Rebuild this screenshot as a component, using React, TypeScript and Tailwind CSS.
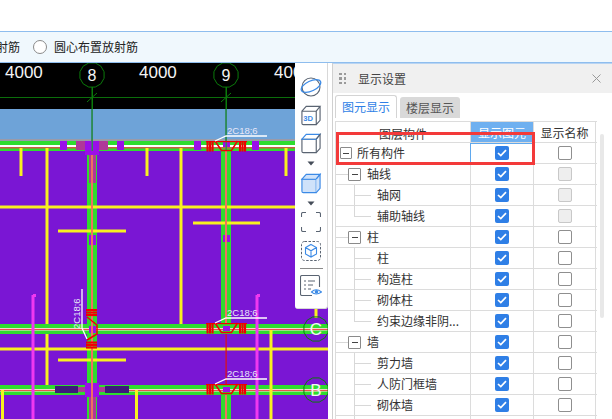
import React from "react";

const font = { fontFamily: '"Noto Sans CJK SC", "Noto Sans", sans-serif' };

function Rebar({ dy }: { dy: number }) {
  const t = (y: number) => y + dy;
  const label = `M215 ${t(141)} L226 ${t(136)} L267 ${t(136)}`;
  return (
    <g>
      {[206.5, 209, 211.5, 239, 241.5, 244].map((x) => (
        <rect key={x} x={x} y={t(141)} width="2.1" height="10.5" fill="#f00000" />
      ))}
      <rect x="206" y={t(141)} width="41" height="1.2" fill="#f00000" />
      <path d={`M215 ${t(141)} L221.5 ${t(150.5)} L231.5 ${t(150.5)} L237.5 ${t(141)}`} fill="none" stroke="#f00000" strokeWidth="1.5" />
      <path d={label} fill="none" stroke="#fff" strokeWidth="1.3" />
      <text x="227" y={t(134)} fontSize="9.5" fill="#e8e8f8" fontFamily="Liberation Sans">2C18;6</text>
    </g>
  );
}

function Axis({ x, y, label, big }: { x: number; y: number; label: string; big?: boolean }) {
  const pts = Array.from({ length: 12 }, (_, i) => {
    const a = (Math.PI / 6) * i + Math.PI / 12;
    return `${x + 12.5 * Math.cos(a)},${y + 12.5 * Math.sin(a)}`;
  }).join(" ");
  return (
    <g>
      <polygon points={pts} fill="none" stroke="#0b7a0b" strokeWidth="1" />
      <text x={x} y={y + 6} textAnchor="middle" fontSize={big ? 17 : 16} fill="#f4f4f4" fontFamily="Liberation Sans">{label}</text>
    </g>
  );
}

function Canvas() {
  const yellow = "#f8f020";
  const Y = ({ x, y1, y2, w = 3 }: { x: number; y1: number; y2: number; w?: number }) => (
    <rect x={x - w / 2} y={y1} width={w} height={y2 - y1} fill={yellow} />
  );
  const H = ({ y, x1, x2 }: { y: number; x1: number; x2: number }) => (
    <rect x={x1} y={y - 1.5} width={x2 - x1} height="3" fill={yellow} />
  );
  const band = (y: number) => (
    <g>
      <rect x="0" y={y} width="328" height="10" fill="#2fdc2f" />
      <rect x="0" y={y + 4} width="328" height="2.6" fill="#f4d8c8" />
      <rect x="0" y={y + 5} width="328" height="1" fill="#e85050" />
    </g>
  );
  return (
    <svg width="328" height="356" viewBox="0 63 328 356" className="block">
      <rect x="0" y="63" width="328" height="356" fill="#7a16d4" />
      <rect x="0" y="63" width="328" height="46" fill="#000" />
      <rect x="0" y="97" width="328" height="1" fill="#0b6e0b" />
      <rect x="0" y="109" width="328" height="31" fill="#6ea3d8" />
      <rect x="0" y="139" width="328" height="2" fill="#9a9aa8" />
      <rect x="0" y="141" width="328" height="10" fill="#2fdc2f" />
      <rect x="0" y="145" width="328" height="2" fill="#fff" />
      <rect x="0" y="147" width="328" height="1.5" fill="#c86040" />

      <rect x="87" y="155" width="10" height="264" fill="#2fdc2f" />
      <rect x="221" y="151" width="10" height="173" fill="#2fdc2f" />
      <rect x="221" y="395" width="10" height="24" fill="#2fdc2f" />

      <Y x={21} y1={148} y2={176} />
      <Y x={47} y1={148} y2={387} />
      <Y x={147} y1={148} y2={176} />
      <Y x={181} y1={148} y2={328} />
      <Y x={286} y1={148} y2={176} />
      <H y={207} x1={0} x2={328} />
      <H y={231} x1={58} x2={126} />
      <H y={223} x1={193} x2={260} />
      <H y={360} x1={58} x2={126} />

      {band(324)}
      {band(385)}
      <H y={349} x1={0} x2={328} />

      <Y x={271} y1={330} y2={419} />
      <Y x={2.5} y1={390} y2={419} />
      <Y x={136.5} y1={390} y2={419} />
      <Y x={316} y1={309} y2={318} />

      <rect x="31.5" y="295" width="3" height="124" fill="#f038f0" />
      <rect x="33" y="294" width="3" height="3" fill="#f038f0" />
      <rect x="255.5" y="295" width="3" height="124" fill="#f038f0" />
      <rect x="257" y="294" width="3" height="3" fill="#f038f0" />

      <rect x="60" y="141" width="7" height="9" fill="#9a10e8" />
      <rect x="76" y="141" width="32" height="9" fill="#b03898" />
      <rect x="85" y="141" width="14" height="14" fill="#9a10e8" />
      <rect x="117" y="141" width="7" height="9" fill="#9a10e8" />
      <rect x="194" y="141" width="7" height="9" fill="#9a10e8" />
      <rect x="223" y="141" width="7" height="6" fill="#9a10e8" />
      <rect x="252" y="141" width="7" height="9" fill="#9a10e8" />
      <rect x="89" y="155" width="7" height="28" fill="#b03898" />
      <rect x="89" y="235" width="7" height="10" fill="#9a10e8" />
      <rect x="223" y="235" width="7" height="7" fill="#9a10e8" />
      <rect x="89" y="326" width="7" height="7" fill="#9a10e8" />
      <rect x="223" y="326" width="7" height="5" fill="#9a10e8" />
      <rect x="223" y="387" width="7" height="5" fill="#9a10e8" />
      <rect x="89" y="397" width="7" height="22" fill="#b03898" />
      <rect x="55" y="386" width="23" height="7" fill="#3d1a7a" />
      <rect x="105" y="386" width="24" height="7" fill="#3d1a7a" />
      <rect x="78" y="387" width="27" height="5" fill="#b03898" />
      <rect x="85" y="383" width="14" height="14" fill="#9a10e8" />

      <rect x="91" y="155" width="2" height="264" fill="#f07060" />
      <rect x="225" y="151" width="2" height="173" fill="#f07060" />
      <rect x="225" y="395" width="2" height="24" fill="#f07060" />
      <rect x="225.5" y="334" width="1.2" height="51" fill="#e01010" />

      <rect x="91.5" y="87" width="1.5" height="54" fill="#0b7a0b" />
      <rect x="225.5" y="87" width="1.5" height="54" fill="#0b7a0b" />
      <rect x="91.5" y="109" width="1.5" height="42" fill="#2e8b57" />
      <rect x="225.5" y="109" width="1.5" height="42" fill="#2e8b57" />
      <path d="M87 102 L97 93 M221 102 L231 93" stroke="#0b7a0b" strokeWidth="1" />

      <g fontFamily="Liberation Sans" fontSize="17" fill="#f4f4f4">
        <text x="5" y="78">4000</text>
        <text x="139" y="78">4000</text>
        <text x="274" y="78">4000</text>
      </g>
      <Axis x={92} y={75} label="8" />
      <Axis x={226} y={75} label="9" />
      <Axis x={316} y={329} label="C" big />
      <Axis x={316} y={390} label="B" big />

      <Rebar dy={0} />
      <Rebar dy={182} />
      <Rebar dy={243} />

      <g>
        {[309, 311.5, 314, 341.5, 344, 346.5].map((y) => (
          <rect key={y} x="86" y={y} width="11" height="2.1" fill="#f00000" />
        ))}
        <path d="M87 317 L97 325 L97 334 L87 340" fill="none" stroke="#f00000" strokeWidth="1.5" />
        <path d="M82 289 L82 328 L87 339" fill="none" stroke="#fff" strokeWidth="1.3" />
        <text transform="translate(80 329) rotate(-90)" fontSize="9.5" fill="#e8e8f8" fontFamily="Liberation Sans">2C18;6</text>
      </g>
    </svg>
  );
}

const gray = "#5a6472";
const blue = "#3b8ae6";

function Cube({ filled }: { filled?: boolean }) {
  return (
    <svg width="22" height="21" viewBox="0 0 22 22" fill="none" className="shrink-0">
      <path d="M1.5 6.5 H16.5 V20.5 H3 Q1.5 20.5 1.5 19 Z" fill={filled ? "#cfe2fa" : "none"} stroke={filled ? blue : gray} strokeWidth="1.2" />
      <path d="M1.5 6.5 L6 1.5 H20.5 L16.5 6.5 Z" fill={filled ? "#cfe2fa" : "none"} stroke={blue} strokeWidth="1.2" />
      <path d="M16.5 6.5 L20.5 1.5 V16 L16.5 20.5" fill={filled ? "#cfe2fa" : "none"} stroke={filled ? blue : gray} strokeWidth="1.2" />
    </svg>
  );
}

function Caret() {
  return (
    <svg width="8" height="5" viewBox="0 0 8 5" className="shrink-0">
      <path d="M0.5 0.5 H7.5 L4 4.5 Z" fill="#444c58" />
    </svg>
  );
}

function Toolbar() {
  return (
    <div className="absolute left-[295px] top-0 w-[33px] h-[246px] bg-white rounded-b-[3px] border-r border-b border-[#d8d8d8] flex flex-col items-center">
      <div className="h-[14px] shrink-0" />
      <svg width="22" height="20" viewBox="0 0 22 20" fill="none" className="shrink-0">
        <circle cx="11" cy="10" r="9" stroke={gray} strokeWidth="1.1" />
        <ellipse cx="11" cy="9" rx="10.5" ry="5" transform="rotate(-25 11 9)" stroke={blue} strokeWidth="1.3" />
      </svg>
      <div className="h-[8px] shrink-0" />
      <svg width="22" height="21" viewBox="0 0 22 22" fill="none" className="shrink-0">
        <path d="M1.5 6.5 H16.5 V20.5 H3 Q1.5 20.5 1.5 19 Z M1.5 6.5 L6 1.5 H20.5 L16.5 6.5 M20.5 1.5 V16 L16.5 20.5" stroke={gray} strokeWidth="1.2" />
        <text x="3" y="17" fontSize="8" fontWeight="700" fill={blue} fontFamily="Liberation Sans">3D</text>
      </svg>
      <div className="h-[7px] shrink-0" />
      <Cube />
      <div className="h-[7px] shrink-0" />
      <Caret />
      <div className="h-[7px] shrink-0" />
      <Cube filled />
      <div className="h-[7px] shrink-0" />
      <Caret />
      <div className="h-[6px] shrink-0" />
      <svg width="20" height="20" viewBox="0 0 20 20" fill="none" stroke={gray} strokeWidth="1.1" className="shrink-0">
        <path d="M0.5 5 V2 Q0.5 0.5 2 0.5 H5 M15 0.5 H18 Q19.5 0.5 19.5 2 V5 M19.5 15 V18 Q19.5 19.5 18 19.5 H15 M5 19.5 H2 Q0.5 19.5 0.5 18 V15" />
      </svg>
      <div className="h-[9px] shrink-0" />
      <svg width="20" height="20" viewBox="0 0 20 20" fill="none" className="shrink-0">
        <rect x="0.5" y="0.5" width="19" height="19" rx="3" stroke={gray} strokeWidth="1" strokeDasharray="2.5 1.5" />
        <path d="M10 3.5 L15.5 6.5 V13 L10 16 L4.5 13 V6.5 Z M4.5 6.5 L10 9.8 L15.5 6.5 M10 9.8 V16" stroke={blue} strokeWidth="1.1" />
      </svg>
      <div className="h-[7px] shrink-0" />
      <div className="w-[23px] h-px bg-[#8a8a8a] shrink-0" />
      <div className="h-[6px] shrink-0" />
      <svg width="22" height="21" viewBox="0 0 22 21" fill="none" className="shrink-0">
        <path d="M12 20.5 H2 Q0.5 20.5 0.5 19 V2 Q0.5 0.5 2 0.5 H18 Q19.5 0.5 19.5 2 V12" stroke={gray} strokeWidth="1.1" />
        <path d="M4 6 H6 M8 6 H15 M4 10 H6 M8 10 H13 M4 14 H6 M8 14 H11" stroke={gray} strokeWidth="1" />
        <path d="M11.5 17 Q16 12.5 21.5 17 Q16 21 11.5 17 Z" stroke={blue} strokeWidth="1.1" />
        <circle cx="16.5" cy="16.8" r="1.8" fill={blue} />
      </svg>
    </div>
  );
}

type Row = { name: string; level: 0 | 1 | 2; disabled?: boolean; last?: boolean };

const rows: Row[] = [
  { name: "所有构件", level: 0 },
  { name: "轴线", level: 1, disabled: true },
  { name: "轴网", level: 2, disabled: true },
  { name: "辅助轴线", level: 2, disabled: true, last: true },
  { name: "柱", level: 1 },
  { name: "柱", level: 2 },
  { name: "构造柱", level: 2 },
  { name: "砌体柱", level: 2 },
  { name: "约束边缘非阴...", level: 2, last: true },
  { name: "墙", level: 1 },
  { name: "剪力墙", level: 2 },
  { name: "人防门框墙", level: 2 },
  { name: "砌体墙", level: 2 },
  { name: "", level: 2 },
];

function Minus({ large }: { large?: boolean }) {
  return (
    <div className={large ? "w-[13px] h-[13px] relative z-10 bg-white border border-[#8a8a8a] rounded-[1px] flex items-center justify-center shrink-0" : "w-[12px] h-[12px] relative z-10 bg-white border border-[#8a8a8a] rounded-[1px] flex items-center justify-center shrink-0"}>
      <div className="w-[6px] h-px bg-[#444]" />
    </div>
  );
}

function Checked() {
  return (
    <div className="w-[14px] h-[14px] rounded-[2px] bg-[#2f7fe6] flex items-center justify-center">
      <svg width="10" height="8" viewBox="0 0 10 8" fill="none">
        <path d="M1 4 L3.8 6.6 L9 1.2" stroke="#fff" strokeWidth="1.7" />
      </svg>
    </div>
  );
}

function Empty({ disabled }: { disabled?: boolean }) {
  return (
    <div className={disabled ? "w-[14px] h-[14px] rounded-[2px] border border-[#c8c8c8] bg-[#eeeeee]" : "w-[14px] h-[14px] rounded-[2px] border border-[#8f8f8f] bg-white"} />
  );
}

function NameCell({ row }: { row: Row }) {
  if (row.level === 0) {
    return (
      <div className="w-[134px] h-full flex items-center pl-[4px] gap-[5px] text-[12px] text-[#333]">
        <Minus />
        <span>{row.name}</span>
      </div>
    );
  }
  if (row.level === 1) {
    return (
      <div className="w-[134px] h-full flex items-center text-[12px] text-[#333] relative">
        <div className="w-[12px] h-px bg-[#d8d8d8]" />
        <Minus large />
        <span className="ml-[6px]">{row.name}</span>
      </div>
    );
  }
  return (
    <div className="w-[134px] h-full flex items-center text-[12px] text-[#333] whitespace-nowrap">
      <div className="w-[18px] shrink-0" />
      <div className={row.last ? "w-[17px] h-[11px] self-start border-l border-b border-[#d8d8d8] shrink-0" : "w-[17px] h-full border-l border-[#d8d8d8] flex items-center shrink-0"}>
        {!row.last && <div className="w-full h-px bg-[#d8d8d8]" />}
      </div>
      <span className="ml-[6px]">{row.name}</span>
    </div>
  );
}

function Panel() {
  return (
    <div className="w-[280px] ml-[4px] h-full border-l border-[#d0d0d0] bg-white overflow-hidden flex flex-col" style={font}>
      <div className="h-[30px] bg-[#f0f0f0] border-t border-[#b8d4f2] flex items-center pl-[6px] pr-[11px] shrink-0">
        <div className="grid grid-cols-2 gap-x-[2px] gap-y-[2px]">
          {[0, 1, 2, 3, 4, 5].map((i) => (
            <div key={i} className="w-[2.5px] h-[2.5px] bg-[#9a9a9a]" />
          ))}
        </div>
        <span className="ml-[12px] text-[12px] text-[#444]">显示设置</span>
        <svg className="ml-auto" width="9" height="9" viewBox="0 0 9 9" fill="none">
          <path d="M0.5 0.5 L8.5 8.5 M8.5 0.5 L0.5 8.5" stroke="#999" strokeWidth="1" />
        </svg>
      </div>
      <div className="h-[25px] flex items-end pl-[2px] gap-[3px] shrink-0 pt-[2px]">
        <div className="w-[62px] h-[23px] rounded-t-[3px] border border-b-0 border-[#d4d4d4] bg-white text-[12px] text-[#2f7fe6] flex items-center justify-center">图元显示</div>
        <div className="w-[60px] h-[21px] rounded-t-[3px] bg-[#d9d9d9] text-[12px] text-[#555] flex items-center justify-center">楼层显示</div>
      </div>
      <div className="h-[3px] shrink-0" />
      <div className="ml-[2px] w-[262px] border-l border-t border-[#dcdcdc] relative">
        <div className="h-[21px] flex border-b border-[#dcdcdc] text-[12px] text-[#333]">
          <div className="w-[134px] text-center leading-[24px]">图层构件</div>
          <div className="w-[63px] bg-[#6fb0f0] text-white text-center leading-[22px] border-l border-[#dcdcdc]">显示图元</div>
          <div className="w-[63px] text-center leading-[22px] border-l border-r border-[#dcdcdc]">显示名称</div>
        </div>
        {rows.map((r, i) => (
          <div key={i} className="h-[21px] flex border-b border-[#dcdcdc]">
            <NameCell row={r} />
            <div className={i === 0 ? "w-[63px] flex items-center justify-center border border-[#5fa8ee]" : "w-[63px] flex items-center justify-center border-l border-[#dcdcdc]"}>
              {r.name !== "" && <Checked />}
            </div>
            <div className="w-[63px] flex items-center justify-center border-l border-r border-[#dcdcdc]">
              {r.name !== "" && <Empty disabled={r.disabled} />}
            </div>
          </div>
        ))}
      </div>
    </div>
  );
}

export default function App() {
  return (
    <div className="relative w-[612px] h-[419px] overflow-hidden bg-white flex flex-col" style={font}>
      <div className="h-[31px] bg-white shrink-0" />
      <div className="h-[32px] shrink-0 bg-[#f0f8fd] border-y border-[#8ebdee] flex items-center text-[12px] text-[#222] whitespace-nowrap">
        <span className="-ml-[4px]">射筋</span>
        <div className="ml-[13px] w-[14px] h-[14px] rounded-full border border-[#8a8a8a] bg-white" />
        <span className="ml-[7px]">圆心布置放射筋</span>
      </div>
      <div className="flex-1 flex min-h-0">
        <div className="relative w-[328px] h-full shrink-0">
          <Canvas />
          <Toolbar />
        </div>
        <Panel />
      </div>
      <div className="absolute left-[336px] top-[132px] w-[199px] h-[33px] border-[3px] border-[#f33a3a]" />
      <div className="absolute left-[600px] top-[134px] w-[4px] h-[184px] rounded-full bg-[#e8e8e8]" />
    </div>
  );
}
